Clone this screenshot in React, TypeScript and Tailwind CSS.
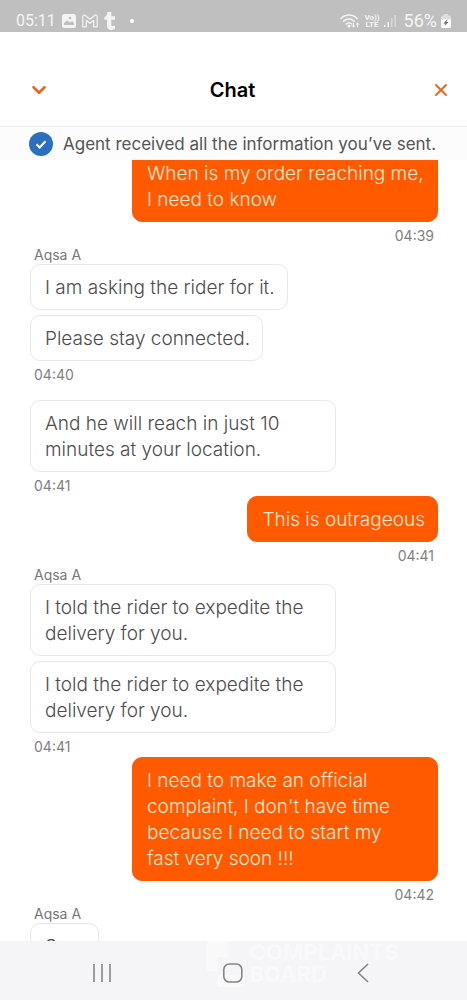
import { ChevronDown, X } from "lucide-react";

type Group = {
	from: "agent" | "me";
	name?: string;
	messages: string[];
	time?: string;
	spaced?: boolean;
};

const groups: Group[] = [
	{ from: "me", messages: ["When is my order reaching me, I need to know"], time: "04:39" },
	{
		from: "agent",
		name: "Aqsa A",
		messages: ["I am asking the rider for it.", "Please stay connected."],
		time: "04:40",
	},
	{
		from: "agent",
		messages: ["And he will reach in just 10 minutes at your location."],
		time: "04:41",
		spaced: true,
	},
	{ from: "me", messages: ["This is outrageous"], time: "04:41" },
	{
		from: "agent",
		name: "Aqsa A",
		messages: [
			"I told the rider to expedite the delivery for you.",
			"I told the rider to expedite the delivery for you.",
		],
		time: "04:41",
	},
	{
		from: "me",
		messages: [
			"I need to make an official complaint, I don't have time because I need to start my fast\u00a0very soon !!!",
		],
		time: "04:42",
	},
	{ from: "agent", name: "Aqsa A", messages: ["Sure"] },
];

function StatusBar() {
	return (
		<div className="flex h-8 shrink-0 items-center justify-between bg-[#bfbfbf] pt-2.5 pr-4 pl-4 font-['Roboto',sans-serif] text-base text-[#f4f4f4]">
			<div className="flex items-center gap-1.5">
				<span>05:11</span>
				<svg className="h-3.5 w-3.5" viewBox="0 0 14 14" fill="none">
					<rect width="14" height="14" rx="2.5" fill="currentColor" />
					<path d="M2 11V9l3-2.5 3 2 2-1.5 2 2v2z" fill="#bfbfbf" />
					<circle cx="8" cy="4" r="1.3" fill="#bfbfbf" />
				</svg>
				<svg className="h-3.5 w-4" viewBox="0 0 16 14" fill="none" stroke="currentColor" strokeWidth="1.2" strokeLinejoin="round">
					<path d="M.8 12.8V2.4C.8.8 2.4.6 3.4 1.5L8 5.2l4.6-3.7c1-.9 2.6-.7 2.6.9v10.4h-3.5V6.3L8 9.3l-3.7-3v6.5z" />
				</svg>
				<svg className="h-[18px] w-3" viewBox="0 0 12 18" fill="currentColor">
					<path d="M3.4 0h3.9v4.3h3.6v3.5H7.3v4.8c0 1.6 1.5 1.8 3.7.9v3.4C6.3 19 3 17.7 3 13.8v-6H.5V5C2.5 4.3 3.3 2.5 3.4 0z" />
				</svg>
				<span className="ml-2 h-1 w-1 rounded-full bg-white" />
			</div>
			<div className="flex items-center gap-1">
				<svg className="h-4 w-5" viewBox="0 0 20 16" fill="none" stroke="currentColor" strokeWidth="1.6" strokeLinecap="round">
					<path d="M1 5.5c4.5-4.7 11.5-4.7 16 0M3.7 8.3c3-3 7.6-3 10.6 0M6.3 11c1.6-1.5 3.8-1.5 5.4 0" />
					<circle cx="9" cy="13" r=".8" fill="currentColor" />
					<path d="M13.5 10v4m-1.3-1.3 1.3 1.3 1.3-1.3M17.5 14v-4m-1.3 1.3 1.3-1.3 1.3 1.3" strokeWidth="1" />
				</svg>
				<div className="flex flex-col text-center text-[8px] leading-[7px] font-bold">
					<span>Vo))</span>
					<span>LTE</span>
				</div>
				<svg className="h-3.5 w-3" viewBox="0 0 12 14" fill="currentColor">
					<path d="M0 11h1.5v2H0zM3.5 8H5v5H3.5z" />
					<path d="M7 4h1.5v9H7zM10.5 1H12v12h-1.5z" opacity=".5" />
				</svg>
				<span className="ml-1 text-lg leading-5">56%</span>
				<svg className="h-3.5 w-2.5" viewBox="0 0 10 14">
					<path d="M3 0h4v1.5h1.5c.8 0 1.5.7 1.5 1.5v4H0V3c0-.8.7-1.5 1.5-1.5H3z" fill="#dedede" />
					<path d="M0 5.5h10v7c0 .8-.7 1.5-1.5 1.5h-7C.7 14 0 13.3 0 12.5z" fill="#fff" />
					<path d="M6.5 5 2.5 9.5h2L3.5 12l4-4H5.3z" fill="#666" />
				</svg>
			</div>
		</div>
	);
}

function ChatHeader() {
	return (
		<header className="flex h-[95px] shrink-0 items-center justify-between border-b border-[#ededed] pt-[22px] pr-4 pl-7">
			<button type="button" aria-label="Minimize">
				<ChevronDown className="h-[22px] w-[22px] text-[#e8651c]" strokeWidth={2.8} />
			</button>
			<h1 className="pr-4 text-xl font-semibold text-black">Chat</h1>
			<button type="button" aria-label="Close">
				<X className="h-5 w-5 text-[#e8651c]" strokeWidth={2.2} />
			</button>
		</header>
	);
}

function Notice() {
	return (
		<div className="flex h-[33px] shrink-0 items-center gap-2.5 bg-[#fcfcfc] pl-[29px]">
			<svg className="h-6 w-6 shrink-0" viewBox="0 0 24 24" fill="none">
				<circle cx="12" cy="12" r="12" fill="#2b70c0" />
				<path d="m7.5 12.3 3.2 3.2 5.8-6.3" stroke="#fff" strokeWidth="2" />
			</svg>
			<p className="text-[17px] leading-6 whitespace-nowrap text-[#555]">Agent received all the information you’ve sent.</p>
		</div>
	);
}

function MessageGroup({ group }: { group: Group }) {
	const mine = group.from === "me";
	return (
		<li className={`flex flex-col ${mine ? "items-end" : "items-start"} ${group.spaced ? "pt-[15px]" : ""}`}>
			{group.name && <span className="px-1 text-sm leading-[18px] text-[#777]">{group.name}</span>}
			<div className={`flex w-full flex-col gap-[5px] ${mine ? "items-end" : "items-start"}`}>
				{group.messages.map((message, i) => (
					<p
						key={i}
						className={`max-w-3/4 rounded-[10px] border pt-2.5 pr-3 pb-2 pl-3.5 text-[19px] leading-[26px] font-light ${
							mine ? "border-[#ff5a00] bg-[#ff5a00] text-[#ffe8d0]" : "border-[#e8e8e8] bg-white text-[#4c4c4c]"
						}`}
					>
						{message}
					</p>
				))}
			</div>
			{group.time && <time className="mt-1 px-1 text-sm leading-5 text-[#808080]">{group.time}</time>}
		</li>
	);
}

function NavBar() {
	return (
		<nav className="relative flex h-[59px] shrink-0 items-center justify-around bg-[#f5f5f8] pt-1 pr-9 pl-9 text-[#858588]">
			<div className="absolute top-0 left-1/2 -ml-7 flex items-start gap-1 text-white opacity-40">
				<svg className="h-12 w-10" viewBox="0 0 40 48" fill="currentColor">
					<path d="M0 0h22v16H12v14H0zM12 34h26v12H12z" />
				</svg>
				<div className="text-[22px] leading-[22px] font-bold">
					<div>COMPLAINTS</div>
					<div>BOARD</div>
				</div>
			</div>
			<button type="button" aria-label="Recent apps" className="relative">
				<svg className="h-5 w-5" viewBox="0 0 20 20" stroke="currentColor" strokeWidth="1.6">
					<path d="M2 1v18M10 1v18M18 1v18" />
				</svg>
			</button>
			<button type="button" aria-label="Home" className="relative">
				<svg className="h-5 w-5" viewBox="0 0 20 20" fill="none" stroke="currentColor" strokeWidth="1.6">
					<rect x="0.8" y="1" width="18" height="18" rx="5.5" />
				</svg>
			</button>
			<button type="button" aria-label="Back" className="relative">
				<svg className="h-5 w-5" viewBox="0 0 20 20" fill="none" stroke="currentColor" strokeWidth="1.6">
					<path d="m13 1-9.5 9 9.5 9" />
				</svg>
			</button>
		</nav>
	);
}

export default function App() {
	return (
		<div className="flex h-screen flex-col bg-white font-['Inter',sans-serif]">
			<StatusBar />
			<ChatHeader />
			<Notice />
			<main className="min-h-0 flex-1 overflow-hidden">
				<ul className="-mt-2.5 flex flex-col pr-[29px] pl-[30px]">
					{groups.map((group, i) => (
						<MessageGroup key={i} group={group} />
					))}
				</ul>
			</main>
			<NavBar />
		</div>
	);
}
